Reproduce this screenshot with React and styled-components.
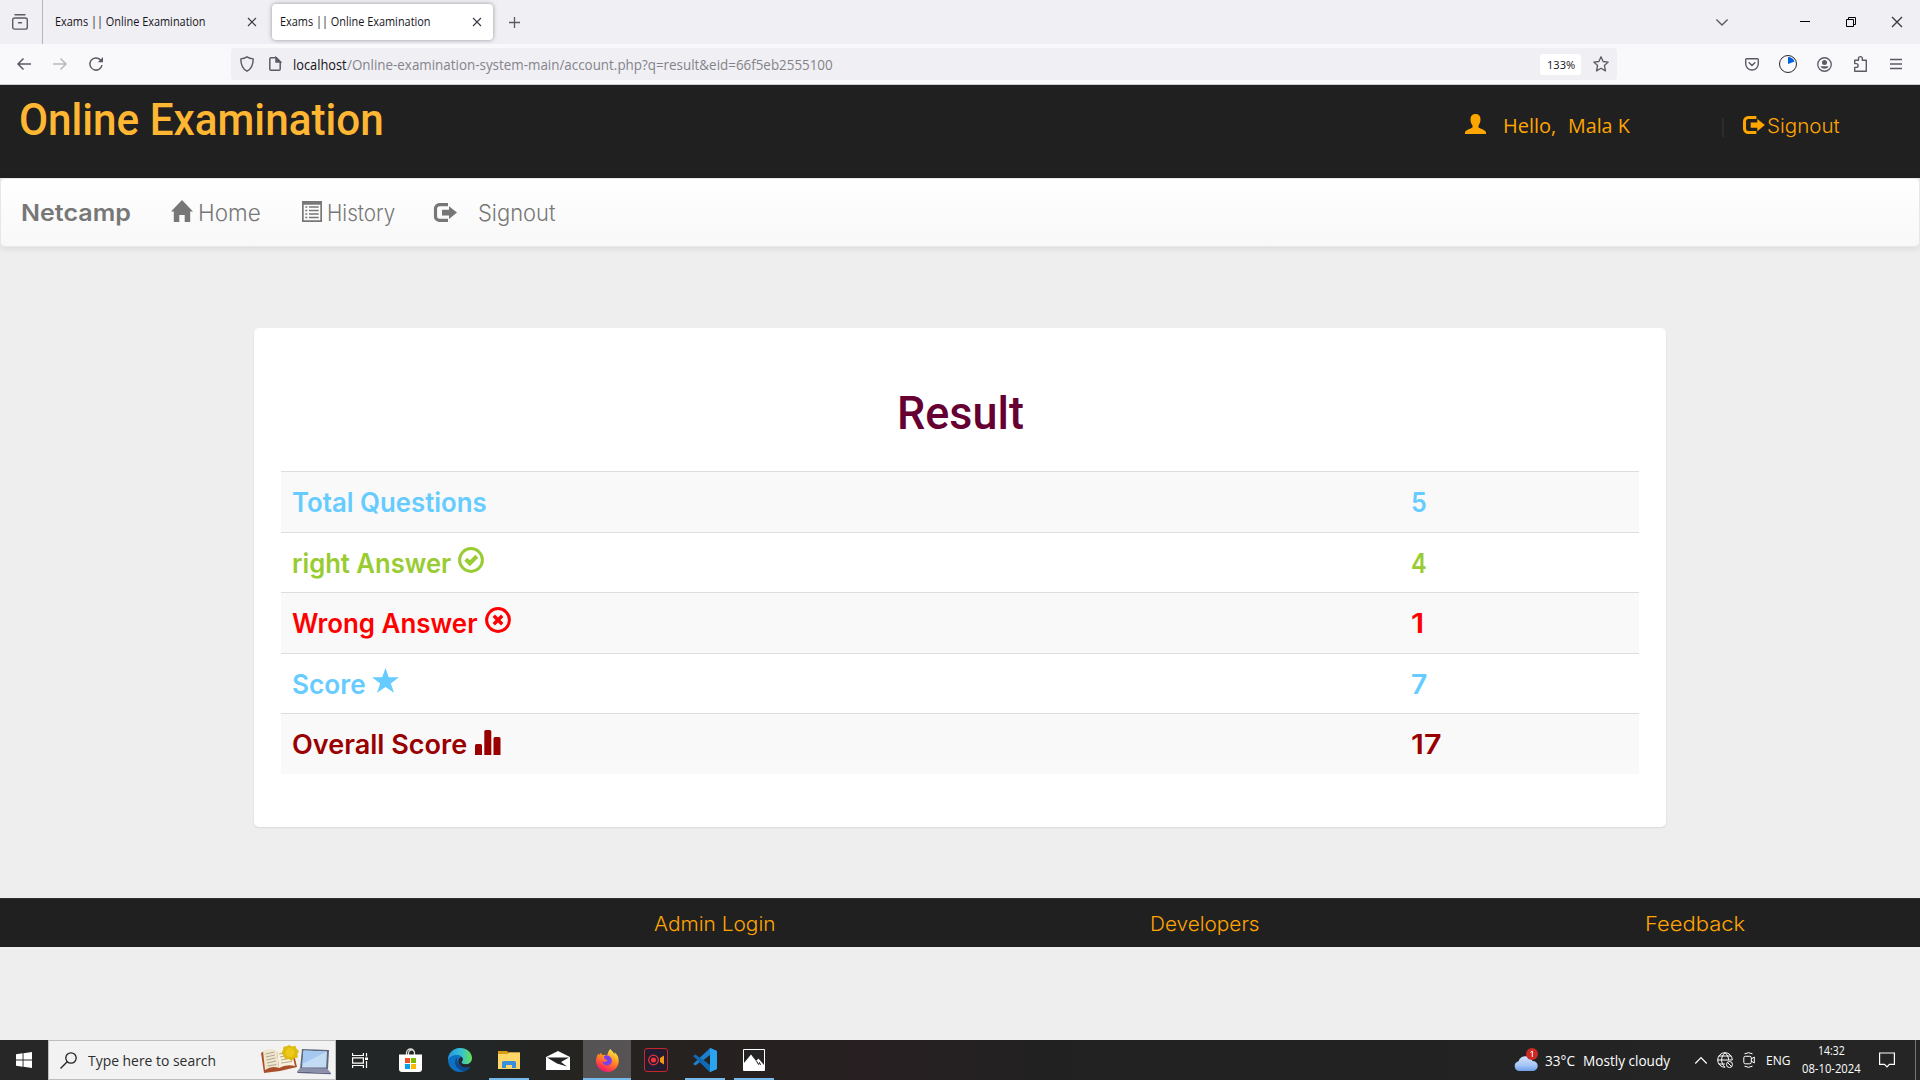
import React, { useLayoutEffect, useRef, useState } from "react";
import styled, { createGlobalStyle } from "styled-components";

const GlobalStyle = createGlobalStyle`
  * { box-sizing: border-box; }
  html, body { margin: 0; padding: 0; background: #eeeeee; }
  body { width: 1920px; height: 1080px; overflow: hidden; }
  svg { display: block; flex: none; }
`;

const gothic = `Inter, "Liberation Sans", sans-serif`;
const segoe = `"Open Sans", "Noto Sans", sans-serif`;
const display = `Roboto, "Liberation Sans", sans-serif`;

/* Text that keeps to a given measure */
const FitBox = styled.span`
  display: block;
  flex: none;
  width: ${(p) => p.$w}px;
  margin-left: ${(p) => p.$ml || 0}px;
  white-space: nowrap;
`;
const FitInner = styled.span`
  display: inline-block;
  transform-origin: 0 50%;
  vertical-align: top;
`;
function Fit({ w, ml, children }) {
  const ref = useRef(null);
  const [scale, setScale] = useState(1);
  useLayoutEffect(() => {
    const measure = () => {
      if (ref.current) setScale(w / ref.current.offsetWidth);
    };
    measure();
    if (document.fonts) document.fonts.ready.then(measure);
  }, [w]);
  return (
    <FitBox $w={w} $ml={ml}>
      <FitInner ref={ref} style={{ transform: `scaleX(${scale})` }}>{children}</FitInner>
    </FitBox>
  );
}

const Icon = styled.svg`
  margin-left: ${(p) => p.$ml || 0}px;
  margin-bottom: ${(p) => p.$up || 0}px;
  width: ${(p) => p.$w || 16}px;
  height: ${(p) => p.$h || p.$w || 16}px;
  overflow: visible;
`;

const Screen = styled.div`
  width: 1920px;
  height: 1080px;
  display: flex;
  flex-direction: column;
  background: #eeeeee;
  overflow: hidden;
`;

/* ---------- browser ---------- */
const TabStrip = styled.div`
  height: 44px;
  flex: none;
  display: flex;
  align-items: center;
  background: #f0eff4;
  color: #15141a;
  font: 12px/44px ${segoe};
  svg { color: #5b5b66; }
`;
const Launcher = styled.div`
  width: 43px;
  height: 44px;
  display: flex;
  align-items: center;
  padding-left: 12px;
  border-right: 1px solid #b5b4ba;
`;
const Tab = styled.div`
  width: ${(p) => p.$w}px;
  height: 36px;
  margin-left: ${(p) => p.$ml}px;
  display: flex;
  align-items: center;
  line-height: 38px;
  border-radius: 4px;
  background: ${(p) => (p.$active ? "#fff" : "transparent")};
  box-shadow: ${(p) => (p.$active ? "0 0 4px rgba(60,60,70,.5)" : "none")};
  span { line-height: 38px; }
`;
const ToolBar = styled.div`
  height: 41px;
  flex: none;
  display: flex;
  align-items: center;
  background: #f9f9fb;
  border-bottom: 1px solid #cccccc;
  font: 14px/32px ${segoe};
  color: #15141a;
  svg { color: #5b5b66; }
`;
const UrlBar = styled.div`
  width: 1386px;
  height: 32px;
  margin-left: 128px;
  display: flex;
  align-items: center;
  border-radius: 4px;
  background: #f0eff4;
`;
const UrlText = styled.div`
  display: flex;
  margin-left: 12px;
  padding-top: 1px;
`;
const UrlPath = styled.span`color: #84838a;`;
const Zoom = styled.div`
  width: 41px;
  height: 21px;
  margin-left: 707px;
  padding-left: 7px;
  border-radius: 3px;
  background: #fff;
  font-size: 11.5px;
  line-height: 21px;
`;

const CloseX = ({ ml, size = 8 }) => (
  <Icon $ml={ml} $w={size} viewBox="0 0 8 8" fill="none" stroke="#3a3a42" strokeWidth="1.1">
    <path d="M0 0l8 8M8 0L0 8" />
  </Icon>
);

function Browser() {
  return (
    <>
      <TabStrip>
        <Launcher>
          <Icon $w={16} viewBox="0 0 16 16" fill="none" stroke="currentColor" strokeWidth="1.4" strokeLinecap="round">
            <path d="M3 .8h10M2.6 4h10.8a1.9 1.9 0 0 1 1.9 1.9v7.3a1.9 1.9 0 0 1-1.9 1.9H2.6a1.9 1.9 0 0 1-1.9-1.9V5.9A1.9 1.9 0 0 1 2.6 4zM6.5 8.8h3" />
          </Icon>
        </Launcher>
        <Tab $w={216} $ml={4}>
          <Fit ml={8} w={151}>Exams || Online Examination</Fit>
          <CloseX ml={42} />
        </Tab>
        <Tab $w={221} $ml={9} $active>
          <Fit ml={8} w={151}>Exams || Online Examination</Fit>
          <CloseX ml={42} />
        </Tab>
        <Icon $ml={16} $w={11} viewBox="0 0 11 11" fill="none" stroke="currentColor" strokeWidth="1.3">
          <path d="M5.5 0v11M0 5.5h11" />
        </Icon>
        <Icon $ml={1196} $w={12} $h={7} viewBox="0 0 12 7" fill="none" stroke="currentColor" strokeWidth="1.4">
          <path d="M.4.5L6 6 11.6.5" />
        </Icon>
        <Icon $ml={72} $w={10} viewBox="0 0 10 10" stroke="#000"><path d="M0 4.5h10" /></Icon>
        <Icon $ml={36} $w={10} viewBox="0 0 10 10" fill="none" stroke="#000">
          <path d="M.5 2.5h7v7h-7zM2.5 2.5v-2h7v7h-2" />
        </Icon>
        <CloseX ml={36} size={10} />
      </TabStrip>
      <ToolBar>
        <Icon $ml={17} $w={14} viewBox="0 0 14 12" fill="none" stroke="currentColor" strokeWidth="1.5"><path d="M14 6H1M6.5.5L1 6l5.5 5.5" /></Icon>
        <Icon $ml={22} $w={14} viewBox="0 0 14 12" fill="none" stroke="#b9b9be" strokeWidth="1.5"><path d="M0 6h13M7.5.5L13 6l-5.5 5.5" /></Icon>
        <Icon $ml={22} $w={14} viewBox="0 0 14 14" fill="none" stroke="currentColor" strokeWidth="1.5">
          <path d="M11.6 3A6.1 6.1 0 1 0 13 8" /><path d="M14 0v5.2H8.8z" fill="currentColor" stroke="none" />
        </Icon>
        <UrlBar>
          <Icon $ml={9} $w={14} $h={16} viewBox="0 0 14 16" fill="none" stroke="currentColor" strokeWidth="1.4">
            <path d="M7 .8c2 1.3 4 1.9 6.2 2.1 0 5.3-1.5 9.7-6.2 12.3C2.3 12.6.8 8.2.8 2.9 3 2.7 5 2.1 7 .8z" strokeLinejoin="round" />
          </Icon>
          <Icon $ml={15} $w={12} $h={14} viewBox="0 0 12 14" fill="none" stroke="currentColor" strokeWidth="1.5">
            <path d="M2 .8h5.2l4 4V12a1.3 1.3 0 0 1-1.3 1.3H2A1.3 1.3 0 0 1 .8 12V2A1.3 1.3 0 0 1 2 .8z" /><path d="M7 .5V5h4.5z" fill="currentColor" />
          </Icon>
          <UrlText>
            <Fit w={54}>localhost</Fit>
            <UrlPath><Fit w={486}>/Online-examination-system-main/account.php?q=result&amp;eid=66f5eb2555100</Fit></UrlPath>
          </UrlText>
          <Zoom><Fit w={28}>133%</Fit></Zoom>
          <Icon $ml={12} $w={16} viewBox="0 0 16 16" fill="none" stroke="currentColor" strokeWidth="1.3" strokeLinejoin="round">
            <path d="M8 .8l2.1 4.7 5.1.6-3.8 3.4 1.1 5.4L8 12.3l-4.5 2.6 1.1-5.4L.8 6.1l5.1-.6z" />
          </Icon>
        </UrlBar>
        <Icon $ml={128} $w={14} $h={13} viewBox="0 0 14 13" fill="none" stroke="currentColor" strokeWidth="1.4">
          <path d="M1.6.8h10.8a.9.9 0 0 1 .9.9v4A6.3 6.3 0 0 1 .7 5.7v-4a.9.9 0 0 1 .9-.9zM3.7 4.3L7 7.5l3.3-3.2" />
        </Icon>
        <Icon $ml={20} $w={18} viewBox="0 0 18 18"><circle cx="9" cy="9" r="8.5" fill="none" stroke="#25252b" /><path d="M9 9V2a7 7 0 0 1 6.5 4.5z" fill="#0061e0" /></Icon>
        <Icon $ml={20} $w={15} viewBox="0 0 16 16" fill="currentColor">
          <circle cx="8" cy="8" r="7.2" fill="none" stroke="currentColor" strokeWidth="1.4" /><circle cx="8" cy="5.8" r="2.7" /><path d="M3.5 9.8h9a5 5 0 0 1-9 0z" />
        </Icon>
        <Icon $ml={22} $w={13} $h={16} viewBox="0 0 13 16" fill="none" stroke="currentColor" strokeWidth="1.4" strokeLinejoin="round">
          <path d="M.7 15.2v-3.8h1.5a1.9 1.9 0 0 0 0-3.8H.7V4.300h3.800V2.500a1.900 1.900 0 0 1 3.800 0v1.800h4v10.900z" />
        </Icon>
        <Icon $ml={23} $w={12} $h={10} viewBox="0 0 12 10" stroke="currentColor" strokeWidth="1.3"><path d="M0 .5h12M0 5h12M0 9.5h12" /></Icon>
      </ToolBar>
    </>
  );
}

/* ---------- page glyphs ---------- */
const SignoutIcon = (p) => (
  <Icon {...p} viewBox="0 0 23 19">
    <path d="M14 1.600H5.500a4 4 0 0 0-4 4v7.800a4 4 0 0 0 4 4H14" fill="none" stroke="currentColor" strokeWidth="3.2" />
    <path d="M8 6.800h7V3.200l8 6.400-8 6.400v-3.600H8z" fill="currentColor" />
  </Icon>
);
const HomeIcon = (p) => (
  <Icon {...p} viewBox="0 0 22 22"><path d="M11 0l11 11.500h-2.800V22h-5.500v-7H8.300v7H2.800V11.500H0z" fill="currentColor" /></Icon>
);
const ListIcon = (p) => (
  <Icon {...p} viewBox="0 0 20 21">
    <path fillRule="evenodd" d="M0 0h20v21H0zM1.700 3.700h16.600v15.600H1.700z" fill="currentColor" />
    <path d="M3.300 6h2M7 6h9.700M3.300 9.500h2M7 9.500h9.700M3.300 13h2M7 13h9.700M3.300 16.500h2M7 16.500h9.700" stroke="currentColor" strokeWidth="1.7" />
  </Icon>
);
const UserIcon = (p) => (
  <Icon {...p} viewBox="0 0 21 20"><path d="M10.500 0c3.300 0 5 2 5 5.200 0 2.200-.6 4.500-2 6.200v2.200c2.500 1.400 5.500 2.200 7 3.600.5.500.5 1.400.5 2.800H0c0-1.400 0-2.300.5-2.800 1.500-1.400 4.500-2.200 7-3.600v-2.200c-1.400-1.700-2-4-2-6.200C5.500 2 7.200 0 10.500 0z" fill="currentColor" /></Icon>
);
const OkCircle = (p) => (
  <Icon {...p} viewBox="0 0 26 26" fill="none" stroke="currentColor"><circle cx="13" cy="13" r="11.4" strokeWidth="3" /><path d="M7.800 12.200l4 4 7-7" strokeWidth="4.200" /></Icon>
);
const RemoveCircle = (p) => (
  <Icon {...p} viewBox="0 0 26 26" fill="none" stroke="currentColor"><circle cx="13" cy="13" r="11.4" strokeWidth="3" /><path d="M8.800 8.800l8.400 8.400M17.200 8.800l-8.400 8.400" strokeWidth="3.4" /></Icon>
);
const StarIcon = (p) => (
  <Icon {...p} viewBox="0 0 27 25"><path d="M13.500 0l3.300 9.300H27l-8.200 6.100 3.200 9.400-8.500-5.700L5 24.800l3.200-9.400L0 9.300h10.200z" fill="currentColor" /></Icon>
);
const StatsIcon = (p) => (
  <Icon {...p} viewBox="0 0 26 25" fill="currentColor">
    <path d="M0 25V15.500Q0 14 1.500 14h4Q7 14 7 15.500V25zM9.300 25V1.500Q9.300 0 10.800 0h4Q16.300 0 16.300 1.500V25zM18.500 25V8.500Q18.500 7 20 7h4Q25.500 7 25.500 8.500V25z" />
  </Icon>
);

/* ---------- page ---------- */
const Header = styled.header`
  height: 93px;
  flex: none;
  display: flex;
  background: #202020;
  color: #ffa500;
`;
const SiteTitle = styled.h1`
  margin: 0;
  padding-left: 19px;
  width: 1465px;
  font: 500 45px/69px ${display};
  color: #ffb733;
`;
const UserArea = styled.div`
  height: 82px;
  display: flex;
  align-items: center;
  font: 400 20px/30px ${segoe};
`;
const Divider = styled.span`
  width: 2px;
  height: 19px;
  margin: 2px 0 0 92px;
  background: #2c2c2c;
`;
const SignLabel = styled.span`
  font-family: ${gothic};
  font-weight: 300;
`;
const NavBar = styled.nav`
  height: 69px;
  flex: none;
  display: flex;
  align-items: center;
  padding: 0 0 0 20px;
  border: 1px solid #e7e7e7;
  border-radius: 5px;
  background: linear-gradient(#ffffff, #f8f8f8);
  box-shadow: 0 1px 7px rgba(0, 0, 0, 0.1);
  color: #777;
  font: 300 22.5px/40px ${gothic};
`;
const Brand = styled.span`font-weight: 600; font-size: 23px;`;
const Panel = styled.main`
  width: 1412px;
  height: 499px;
  flex: none;
  margin: 81px auto 0 254px;
  padding: 46px 27px 0;
  border-radius: 5px;
  background: #fff;
  box-shadow: 0 1px 2px rgba(0, 0, 0, 0.09);
`;
const PanelTitle = styled.h2`
  margin: 0;
  height: 97px;
  display: flex;
  justify-content: center;
  color: #660033;
  font: 500 46px/78px ${display};
`;
const Row = styled.div`
  height: ${(p) => p.$h}px;
  display: grid;
  grid-template-columns: 1119px 1fr;
  padding: 2px 0 0 11px;
  border-top: 1px solid #dddddd;
  background: ${(p) => (p.$odd ? "#f9f9f9" : "#fff")};
  color: ${(p) => p.$color};
  font: 600 26.6px/57px ${gothic};
`;
const Cell = styled.div`
  display: flex;
  align-items: center;
  height: 57px;
`;
const Footer = styled.footer`
  height: 49px;
  flex: none;
  margin-top: 71px;
  padding-left: 470px;
  display: grid;
  grid-template-columns: repeat(3, 490px);
  justify-items: center;
  overflow: hidden;
  border-top: 1px solid #303030;
  background: #202020;
  color: #ffa500;
  font: 300 20px/51px ${gothic};
`;
const Spare = styled.div`flex: 1;`;

const results = [
  { label: "Total Questions", w: 195, value: "5", vw: 16, color: "#66ccff", h: 61 },
  { label: "right Answer", w: 159, value: "4", vw: 16, color: "#99cc32", h: 60, icon: <OkCircle $ml={7} $w={26} $up={7} /> },
  { label: "Wrong Answer", w: 185, value: "1", vw: 13, color: "#ff0000", h: 61, icon: <RemoveCircle $ml={8} $w={26} $up={7} /> },
  { label: "Score", w: 74, value: "7", vw: 16, color: "#66ccff", h: 60, icon: <StarIcon $ml={6} $w={27} $h={25} $up={8} /> },
  { label: "Overall Score", w: 175, value: "17", vw: 31, color: "#990000", h: 61, icon: <StatsIcon $ml={8} $w={26} $h={25} $up={4} /> },
];

/* ---------- taskbar ---------- */
const TaskBar = styled.div`
  height: 40px;
  flex: none;
  display: flex;
  background: linear-gradient(90deg, #272727, #222626 25%, #26231f 32%, #271f21 45%, #212121 55%, #252525);
  color: #fff;
  font: 13.5px/38px ${segoe};
`;
const Start = styled.div`
  width: 48px;
  display: flex;
  align-items: center;
  justify-content: center;
`;
const Search = styled.div`
  width: 288px;
  height: 40px;
  display: flex;
  align-items: center;
  padding-left: 11px;
  border: 1px solid #bdbdbd;
  background: #f2f2f2;
  color: #2e2e2e;
  font-size: 15px;
`;
const TaskItem = styled.div`
  width: ${(p) => p.$w || 48}px;
  margin-left: ${(p) => p.$ml ?? 1}px;
  height: 40px;
  display: flex;
  align-items: center;
  justify-content: center;
  background: ${(p) => (p.$active ? "#565354" : "transparent")};
  box-shadow: ${(p) => (p.$open ? "inset 0 -2px 0 #76b9ed" : "none")};
`;
const Tray = styled.div`
  margin-left: auto;
  width: 406px;
  display: flex;
  align-items: center;
`;
const Big = styled.span`font-size: 15px;`;
const Clock = styled.div`
  width: 60px;
  margin-left: 12px;
  display: flex;
  flex-direction: column;
  align-items: center;
  font-size: 12px;
  line-height: 18px;
  padding-bottom: 1px;
`;
const ShowDesktop = styled.div`
  width: 5px;
  height: 40px;
  margin-left: 20px;
  border-left: 1px solid #777;
`;

function Taskbar() {
  return (
    <TaskBar>
      <Start>
        <Icon $w={16} viewBox="0 0 16 16" fill="#fff"><path d="M0 2.300L6.600 1.300v6.200H0zM7.500 1.200L16 0v7.500H7.500zM0 8.400h6.600v6.300L0 13.700zM7.500 8.400H16V16l-8.500-1.200z" /></Icon>
      </Start>
      <Search>
        <Icon $w={17} viewBox="0 0 17 17" fill="none" stroke="#222" strokeWidth="1.3"><circle cx="11" cy="6" r="5.2" /><path d="M7.200 9.800L.5 16.500" /></Icon>
        <Fit ml={11} w={128}>Type here to search</Fit>
        <Icon $ml={45} $w={72} $h={30} viewBox="0 0 72 30">
          <path d="M0 8l3-2 14 1 15-2 4 17-17 4-16 2z" fill="#a9502b" />
          <path d="M2 6q8-4 14 0l2 17q-7-3-14 2z" fill="#eee6cf" /><path d="M16 6q7-5 14-2l4 17q-9-2-16 2z" fill="#f7f1de" />
          <path d="M4.500 9l9-2M5 12l9-2M5.500 15l9-2M6 18l9-2M6.500 21l9-1.500M18 9l9-2M19 12l9-2M20 15l10-2M20 18l11-1.500" stroke="#a99f86" strokeWidth=".9" />
          <path d="M28 0l3 1.500L34.500.8l1 3L38 6l-1.500 3 .3 3.500-3.500.7L30.500 16l-3-2-3.500.4-1.200-3.200L20.500 8 22 5l.4-3.300 3.300-.4z" fill="#dfbb10" />
          <circle cx="29" cy="7.500" r="4.500" fill="#ebca18" />
          <path d="M41 4l27 1-1 19H39z" fill="#5e6678" /><path d="M42.500 5.500L66 6.500l-.8 16H41z" fill="#c3dcf6" /><path d="M42.500 5.500L66 6.500 41.500 19z" fill="#a5c8f0" />
          <path d="M39 23l27 .5 4 4.500-34-1.500z" fill="#8b90aa" /><path d="M36 26.500l34 1.500-.5 1.200-33-1.200z" fill="#5d6080" />
        </Icon>
      </Search>
      <TaskItem $ml={0}>
        <Icon $w={16} $h={15} viewBox="0 0 16 15" fill="none" stroke="#fff" strokeWidth="1.2"><path d="M.6 0v2.500h10.800V0M.6 4.800h10.800v5.400H.6zM.6 15v-2.500h10.800V15M14.500 0v3.500M14.500 8v7" /><path d="M13 4.500h3V7h-3z" fill="#fff" stroke="none" /></Icon>
      </TaskItem>
      <TaskItem $ml={2}>
        <Icon $w={23} viewBox="0 0 23 23"><path d="M7.500 6V4a4 4 0 0 1 8 0v2M9.500 6V3.800a3 3 0 0 1 5.500-1.500" fill="none" stroke="#ddd" strokeWidth="1.3" /><path d="M0 5.500h23V20q0 3-3 3H3q-3 0-3-3z" fill="#fff" /><path d="M6 9h5v5H6z" fill="#f25022" /><path d="M12 9h5v5h-5z" fill="#7fba00" /><path d="M6 15h5v5H6z" fill="#00a4ef" /><path d="M12 15h5v5h-5z" fill="#ffb900" /></Icon>
      </TaskItem>
      <TaskItem $ml={2}>
        <Icon $w={24} viewBox="0 0 24 24">
          <defs><linearGradient id="eg" x1="0" x2="1"><stop offset="0" stopColor="#2596e0" /><stop offset=".55" stopColor="#36c0d2" /><stop offset="1" stopColor="#69e052" /></linearGradient></defs>
          <circle cx="12" cy="12" r="12" fill="#0f6fc0" />
          <path d="M0 12C0 5 5.500 0 12 0c7 0 12 4.500 12 10.300 0 4-3 6-6.200 6-2.800 0-4.300-1-4.300-2 0-.8 1.300-1.300 1.300-3.200C14.800 9 12.500 7 8.700 7 4 7 1 9.500 0 12z" fill="url(#eg)" />
          <path d="M9 9.500c-4 4-1.500 11.500 5.500 13.500 3 .5 6-1 8-4.500-2 1-4.500 1.500-7 .7C11 18 8.500 14 9 9.500z" fill="#0b4a92" />
          <path d="M13.500 14.300c0 1 1.500 2 4.300 2 3.200 0 6.200-2 6.200-6v6l-1.500 2.200c-2 1-4.500 1.500-7 .7C12 18 9 14.500 11 11q.8-1.500 2.700-2c1 1 1.200 2 1.100 2.500 0 1.300-1.300 2-1.300 2.800z" fill="#262626" />
        </Icon>
      </TaskItem>
      <TaskItem $w={40} $ml={5} $open>
        <Icon $w={22} $h={18} viewBox="0 0 22 18"><path d="M0 0h9l1.500 1.500H22V18H0z" fill="#d99c12" /><path d="M0 3h9.500L11 1.500h11V18H0z" fill="#ffd768" /><path d="M4 17v-5.500Q4 10 5.500 10h11q1.500 0 1.500 1.500V17h-4v-3H8v3z" fill="#3b8ede" /></Icon>
      </TaskItem>
      <TaskItem $ml={5}>
        <Icon $w={24} $h={19} viewBox="0 0 24 19"><path d="M0 6l12-6 12 6v13H0z" fill="#fff" /><path d="M1 6.500h22L15 11l6 4.500-10-3z" fill="#242424" /></Icon>
      </TaskItem>
      <TaskItem $active $open>
        <Icon $w={23} viewBox="0 0 23 23">
          <defs><linearGradient id="fx" x1=".8" y1="0" x2=".3" y2="1"><stop offset="0" stopColor="#fff44f" /><stop offset=".4" stopColor="#ff9a1f" /><stop offset=".8" stopColor="#ff3b47" /><stop offset="1" stopColor="#e31587" /></linearGradient></defs>
          <path d="M14.500 0c1 2 3 3 4 5 .5-.5.3-1.200.2-1.700C21.500 5.500 23 9 22.700 12.500 22.300 18.500 17.500 23 11.500 23 5 23 0 18 0 11.800 0 8.500 1.300 6 2.700 4.500L3.200 6 5 3.800 6 6q3-.5 5 .3c1-1.500 1-4.500 3.500-6.300z" fill="url(#fx)" />
          <path d="M8 7q3-1.500 5.500.3c3 2 3.500 7-.5 8.700-3 1.200-6.500-.5-6.500-3.500 1.500 1 4.500.5 5-1.500-2 0-3.500-1-3.500-4z" fill="#7a3df0" />
        </Icon>
      </TaskItem>
      <TaskItem>
        <Icon $w={24} viewBox="0 0 24 24" fill="none"><rect x=".5" y=".5" width="23" height="23" rx="2.5" fill="#211c30" stroke="#c8262c" /><circle cx="9.500" cy="12" r="4.8" stroke="#e5343a" strokeWidth="1.3" /><circle cx="9.500" cy="12" r="2.5" fill="#f2353b" /><path d="M16 10l4-2.500v9L16 14z" fill="#f29a12" /></Icon>
      </TaskItem>
      <TaskItem $w={40} $ml={5} $open>
        <Icon $w={24} viewBox="0 0 24 24"><path d="M17 0l7 3v18l-7 3L7 14l-4.500 3.500L0 16l14-13z" fill="#1b80cf" /><path d="M2.500 6.500L0 8l17 16 1-6.500z" fill="#0f69b3" /><path d="M17 0l7 3v18l-7 3z" fill="#2ba4f0" /><path d="M17 7v10l-6.500-5z" fill="#242424" /></Icon>
      </TaskItem>
      <TaskItem $w={40} $ml={9} $open>
        <Icon $w={22} viewBox="0 0 22 22"><path d="M.5.500h21v21H.5z" fill="#242424" stroke="#fff" /><path d="M1 21v-7l7-8.500 5 6.500 2.500-2.500L21 16v5z" fill="#fff" /><path d="M13.500 12l2 3.500 1-2 1 2.500" stroke="#242424" fill="none" /></Icon>
      </TaskItem>
      <Tray>
        <Icon $w={25} $h={24} viewBox="0 0 25 24">
          <defs><linearGradient id="cl" x2="0" y2="1"><stop offset="0" stopColor="#cfe2fb" /><stop offset=".6" stopColor="#a6c6f5" /><stop offset="1" stopColor="#6f9fe9" /></linearGradient></defs>
          <path d="M5 23a5 5 0 0 1-.5-9.800A7.500 7.500 0 0 1 18.500 13a5 5 0 0 1 .5 10z" fill="url(#cl)" />
          <circle cx="18" cy="6" r="6" fill="#cc2a22" /><path d="M16.500 4.500L18.300 3v6" stroke="#fff" fill="none" />
        </Icon>
        <Fit ml={6} w={30}><Big>33°C</Big></Fit>
        <Fit ml={8} w={87}><Big>Mostly cloudy</Big></Fit>
        <Icon $ml={25} $w={12} $h={7} viewBox="0 0 12 7" fill="none" stroke="#fff" strokeWidth="1.2"><path d="M.3 6.500L6 .7l5.700 5.800" /></Icon>
        <Icon $ml={10} $w={16} viewBox="0 0 16 16" fill="none" stroke="#fff">
          <path d="M15.300 8A7.300 7.300 0 1 0 8 15.300M8 .7C3.500 5 3.500 11 8 15.300M8 .7c2.500 2.300 3.500 4.500 3.600 7.300M.7 8h14.600M1.800 4h12.400M1.800 12H8" />
          <circle cx="12.500" cy="12.500" r="3" /><path d="M10.500 10.500l4 4" />
        </Icon>
        <Icon $ml={10} $w={12} $h={16} viewBox="0 0 12 16" fill="none" stroke="#fff"><rect x=".8" y="4.300" width="7.500" height="7.500" rx="1.5" /><path d="M8.300 7l3-2v6l-3-2M1.500 1.800q4-2.200 8 0M1.500 14.200q4 2.200 8 0" /></Icon>
        <Fit ml={11} w={24}>ENG</Fit>
        <Clock><Fit w={27}>14:32</Fit><Fit w={59}>08-10-2024</Fit></Clock>
        <Icon $ml={18} $w={16} viewBox="0 0 16 16" fill="none" stroke="#fff" strokeWidth="1.2"><path d="M.6 1h14.800v11.400h-5L8 15l-2.500-2.600H.6z" /></Icon>
        <ShowDesktop />
      </Tray>
    </TaskBar>
  );
}

export default function App() {
  return (
    <Screen>
      <GlobalStyle />
      <Browser />
      <Header>
        <SiteTitle><Fit w={365}>Online Examination</Fit></SiteTitle>
        <UserArea>
          <UserIcon $w={21} $h={20} $up={4} />
          <Fit ml={17} w={53}>Hello,</Fit>
          <Fit ml={12} w={62}>Mala K</Fit>
          <Divider />
          <SignoutIcon $ml={19} $w={22} $h={18} $up={2} />
          <SignLabel><Fit ml={2} w={73}>Signout</Fit></SignLabel>
        </UserArea>
      </Header>
      <NavBar>
        <Brand><Fit w={110}>Netcamp</Fit></Brand>
        <HomeIcon $ml={40} $w={22} $up={3} />
        <Fit ml={5} w={63}>Home</Fit>
        <ListIcon $ml={41} $w={20} $h={21} $up={3} />
        <Fit ml={5} w={68}>History</Fit>
        <SignoutIcon $ml={39} $w={23} $h={19} $up={1} />
        <Fit ml={21} w={78}>Signout</Fit>
      </NavBar>
      <Panel>
        <PanelTitle><Fit w={127}>Result</Fit></PanelTitle>
        {results.map((r, i) => (
          <Row key={r.label} $h={r.h} $odd={i % 2 === 0} $color={r.color}>
            <Cell><Fit w={r.w}>{r.label}</Fit>{r.icon}</Cell>
            <Cell><Fit w={r.vw}>{r.value}</Fit></Cell>
          </Row>
        ))}
      </Panel>
      <Footer>
        <Fit w={122}>Admin Login</Fit>
        <Fit w={110}>Developers</Fit>
        <Fit w={100}>Feedback</Fit>
      </Footer>
      <Spare />
      <Taskbar />
    </Screen>
  );
}
